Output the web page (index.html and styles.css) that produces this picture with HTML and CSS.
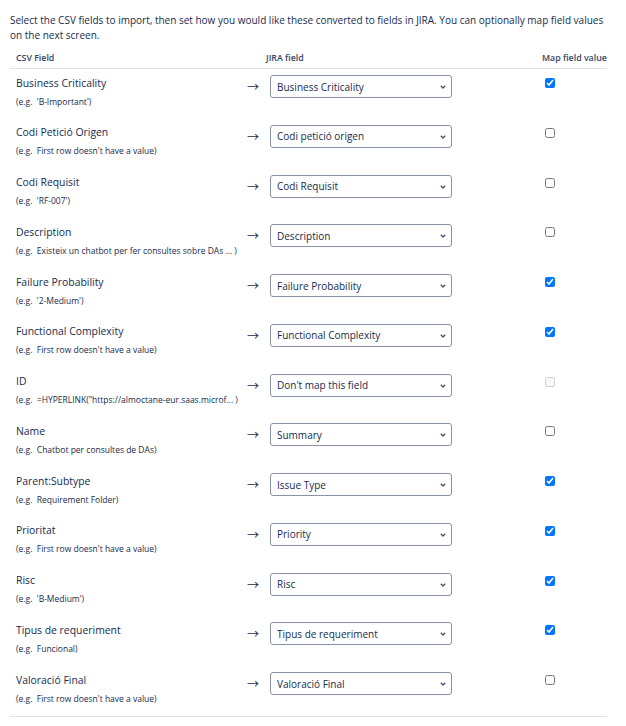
FILE: index.html
```html
<!DOCTYPE html>
<html lang="en">
<head>
    <meta charset="UTF-8">
    <meta name="viewport" content="width=device-width, initial-scale=1.0">
    <title>CSV Import - Map fields</title>
    <link rel="stylesheet" href="styles.css">
</head>
<body>
    <div class="import-mapping">
        <p class="intro">Select the CSV fields to import, then set how you would like these converted to fields in JIRA. You can optionally map field values on the next screen.</p>

        <div class="mapping-table">
            <div class="mapping-head">
                <div>CSV Field</div>
                <div></div>
                <div>JIRA field</div>
                <div>Map field value</div>
            </div>

            <div class="mapping-row">
                <div class="csv-field">
                    <div class="field-name">Business Criticality</div>
                    <div class="field-example">(e.g.&nbsp; 'B-Important')</div>
                </div>
                <div class="map-arrow">→</div>
                <div class="jira-field">
                    <div class="select-wrap">
                        <select><option>Business Criticality</option></select>
                        <svg class="chevron" width="6" height="4" viewBox="0 0 6 4"><path d="M0.8 0.8 L3 3 L5.2 0.8" fill="none" stroke="#42526e" stroke-width="1.3"/></svg>
                    </div>
                </div>
                <div class="map-value"><input type="checkbox" checked></div>
            </div>

            <div class="mapping-row">
                <div class="csv-field">
                    <div class="field-name">Codi Petició Origen</div>
                    <div class="field-example">(e.g.&nbsp; First row doesn't have a value)</div>
                </div>
                <div class="map-arrow">→</div>
                <div class="jira-field">
                    <div class="select-wrap">
                        <select><option>Codi petició origen</option></select>
                        <svg class="chevron" width="6" height="4" viewBox="0 0 6 4"><path d="M0.8 0.8 L3 3 L5.2 0.8" fill="none" stroke="#42526e" stroke-width="1.3"/></svg>
                    </div>
                </div>
                <div class="map-value"><input type="checkbox"></div>
            </div>

            <div class="mapping-row">
                <div class="csv-field">
                    <div class="field-name">Codi Requisit</div>
                    <div class="field-example">(e.g.&nbsp; 'RF-007')</div>
                </div>
                <div class="map-arrow">→</div>
                <div class="jira-field">
                    <div class="select-wrap">
                        <select><option>Codi Requisit</option></select>
                        <svg class="chevron" width="6" height="4" viewBox="0 0 6 4"><path d="M0.8 0.8 L3 3 L5.2 0.8" fill="none" stroke="#42526e" stroke-width="1.3"/></svg>
                    </div>
                </div>
                <div class="map-value"><input type="checkbox"></div>
            </div>

            <div class="mapping-row">
                <div class="csv-field">
                    <div class="field-name">Description</div>
                    <div class="field-example">(e.g.&nbsp; Existeix un chatbot per fer consultes sobre DAs ... )</div>
                </div>
                <div class="map-arrow">→</div>
                <div class="jira-field">
                    <div class="select-wrap">
                        <select><option>Description</option></select>
                        <svg class="chevron" width="6" height="4" viewBox="0 0 6 4"><path d="M0.8 0.8 L3 3 L5.2 0.8" fill="none" stroke="#42526e" stroke-width="1.3"/></svg>
                    </div>
                </div>
                <div class="map-value"><input type="checkbox"></div>
            </div>

            <div class="mapping-row">
                <div class="csv-field">
                    <div class="field-name">Failure Probability</div>
                    <div class="field-example">(e.g.&nbsp; '2-Medium')</div>
                </div>
                <div class="map-arrow">→</div>
                <div class="jira-field">
                    <div class="select-wrap">
                        <select><option>Failure Probability</option></select>
                        <svg class="chevron" width="6" height="4" viewBox="0 0 6 4"><path d="M0.8 0.8 L3 3 L5.2 0.8" fill="none" stroke="#42526e" stroke-width="1.3"/></svg>
                    </div>
                </div>
                <div class="map-value"><input type="checkbox" checked></div>
            </div>

            <div class="mapping-row">
                <div class="csv-field">
                    <div class="field-name">Functional Complexity</div>
                    <div class="field-example">(e.g.&nbsp; First row doesn't have a value)</div>
                </div>
                <div class="map-arrow">→</div>
                <div class="jira-field">
                    <div class="select-wrap">
                        <select><option>Functional Complexity</option></select>
                        <svg class="chevron" width="6" height="4" viewBox="0 0 6 4"><path d="M0.8 0.8 L3 3 L5.2 0.8" fill="none" stroke="#42526e" stroke-width="1.3"/></svg>
                    </div>
                </div>
                <div class="map-value"><input type="checkbox" checked></div>
            </div>

            <div class="mapping-row">
                <div class="csv-field">
                    <div class="field-name">ID</div>
                    <div class="field-example">(e.g.&nbsp; =HYPERLINK("https://almoctane-eur.saas.microf... )</div>
                </div>
                <div class="map-arrow">→</div>
                <div class="jira-field">
                    <div class="select-wrap">
                        <select><option>Don't map this field</option></select>
                        <svg class="chevron" width="6" height="4" viewBox="0 0 6 4"><path d="M0.8 0.8 L3 3 L5.2 0.8" fill="none" stroke="#42526e" stroke-width="1.3"/></svg>
                    </div>
                </div>
                <div class="map-value"><input type="checkbox" disabled></div>
            </div>

            <div class="mapping-row">
                <div class="csv-field">
                    <div class="field-name">Name</div>
                    <div class="field-example">(e.g.&nbsp; Chatbot per consultes de DAs)</div>
                </div>
                <div class="map-arrow">→</div>
                <div class="jira-field">
                    <div class="select-wrap">
                        <select><option>Summary</option></select>
                        <svg class="chevron" width="6" height="4" viewBox="0 0 6 4"><path d="M0.8 0.8 L3 3 L5.2 0.8" fill="none" stroke="#42526e" stroke-width="1.3"/></svg>
                    </div>
                </div>
                <div class="map-value"><input type="checkbox"></div>
            </div>

            <div class="mapping-row">
                <div class="csv-field">
                    <div class="field-name">Parent:Subtype</div>
                    <div class="field-example">(e.g.&nbsp; Requirement Folder)</div>
                </div>
                <div class="map-arrow">→</div>
                <div class="jira-field">
                    <div class="select-wrap">
                        <select><option>Issue Type</option></select>
                        <svg class="chevron" width="6" height="4" viewBox="0 0 6 4"><path d="M0.8 0.8 L3 3 L5.2 0.8" fill="none" stroke="#42526e" stroke-width="1.3"/></svg>
                    </div>
                </div>
                <div class="map-value"><input type="checkbox" checked></div>
            </div>

            <div class="mapping-row">
                <div class="csv-field">
                    <div class="field-name">Prioritat</div>
                    <div class="field-example">(e.g.&nbsp; First row doesn't have a value)</div>
                </div>
                <div class="map-arrow">→</div>
                <div class="jira-field">
                    <div class="select-wrap">
                        <select><option>Priority</option></select>
                        <svg class="chevron" width="6" height="4" viewBox="0 0 6 4"><path d="M0.8 0.8 L3 3 L5.2 0.8" fill="none" stroke="#42526e" stroke-width="1.3"/></svg>
                    </div>
                </div>
                <div class="map-value"><input type="checkbox" checked></div>
            </div>

            <div class="mapping-row">
                <div class="csv-field">
                    <div class="field-name">Risc</div>
                    <div class="field-example">(e.g.&nbsp; 'B-Medium')</div>
                </div>
                <div class="map-arrow">→</div>
                <div class="jira-field">
                    <div class="select-wrap">
                        <select><option>Risc</option></select>
                        <svg class="chevron" width="6" height="4" viewBox="0 0 6 4"><path d="M0.8 0.8 L3 3 L5.2 0.8" fill="none" stroke="#42526e" stroke-width="1.3"/></svg>
                    </div>
                </div>
                <div class="map-value"><input type="checkbox" checked></div>
            </div>

            <div class="mapping-row">
                <div class="csv-field">
                    <div class="field-name">Tipus de requeriment</div>
                    <div class="field-example">(e.g.&nbsp; Funcional)</div>
                </div>
                <div class="map-arrow">→</div>
                <div class="jira-field">
                    <div class="select-wrap">
                        <select><option>Tipus de requeriment</option></select>
                        <svg class="chevron" width="6" height="4" viewBox="0 0 6 4"><path d="M0.8 0.8 L3 3 L5.2 0.8" fill="none" stroke="#42526e" stroke-width="1.3"/></svg>
                    </div>
                </div>
                <div class="map-value"><input type="checkbox" checked></div>
            </div>

            <div class="mapping-row">
                <div class="csv-field">
                    <div class="field-name">Valoració Final</div>
                    <div class="field-example">(e.g.&nbsp; First row doesn't have a value)</div>
                </div>
                <div class="map-arrow">→</div>
                <div class="jira-field">
                    <div class="select-wrap">
                        <select><option>Valoració Final</option></select>
                        <svg class="chevron" width="6" height="4" viewBox="0 0 6 4"><path d="M0.8 0.8 L3 3 L5.2 0.8" fill="none" stroke="#42526e" stroke-width="1.3"/></svg>
                    </div>
                </div>
                <div class="map-value"><input type="checkbox"></div>
            </div>
        </div>
    </div>
</body>
</html>
```

FILE: styles.css
```css
body {
    margin: 0;
    font-family: "Open Sans", "Noto Sans", sans-serif;
    color: #172b4d;
    background-color: #fff;
}
.import-mapping {
    padding: 13px 19px 0 10px;
}
.intro {
    margin: 0 0 5px;
    font-size: 10px;
    line-height: 15px;
}
.mapping-table {
    border-bottom: 1px solid #dfe1e6;
}
.mapping-head,
.mapping-row {
    display: grid;
    grid-template-columns: 226px 24px 276px 71px;
}
.mapping-head {
    border-bottom: 1px solid #dfe1e6;
    font-size: 8.8px;
    font-weight: 600;
    line-height: 12px;
    color: #344563;
}
.mapping-head div {
    padding: 4px 0 4px 6px;
    white-space: nowrap;
}
.mapping-row {
    height: 49.77px;
}
.csv-field {
    padding: 6.5px 0 0 6px;
    white-space: nowrap;
}
.field-name {
    font-size: 10.4px;
    line-height: 15px;
}
.field-example {
    margin-top: 5px;
    font-size: 8.5px;
    line-height: 12px;
}
.map-arrow {
    padding: 6px 1px 0 0;
    font-family: "Noto Sans CJK JP", "DejaVu Sans", sans-serif;
    font-size: 12px;
    line-height: 23px;
    text-align: right;
}
.jira-field {
    padding: 6px 0 0 10px;
}
.select-wrap {
    position: relative;
    width: 182px;
}
.select-wrap select {
    appearance: none;
    -webkit-appearance: none;
    display: block;
    width: 182px;
    height: 23px;
    margin: 0;
    padding: 0 18px 0 6px;
    border: 1px solid #8993a4;
    border-radius: 3px;
    background-color: #fff;
    font-family: inherit;
    font-size: 10px;
    color: #172b4d;
}
.chevron {
    position: absolute;
    right: 6px;
    top: 10px;
    pointer-events: none;
}
.map-value {
    padding: 9px 0 0 9px;
}
.map-value input {
    display: block;
    width: 10px;
    height: 10px;
    margin: 0;
}
```
